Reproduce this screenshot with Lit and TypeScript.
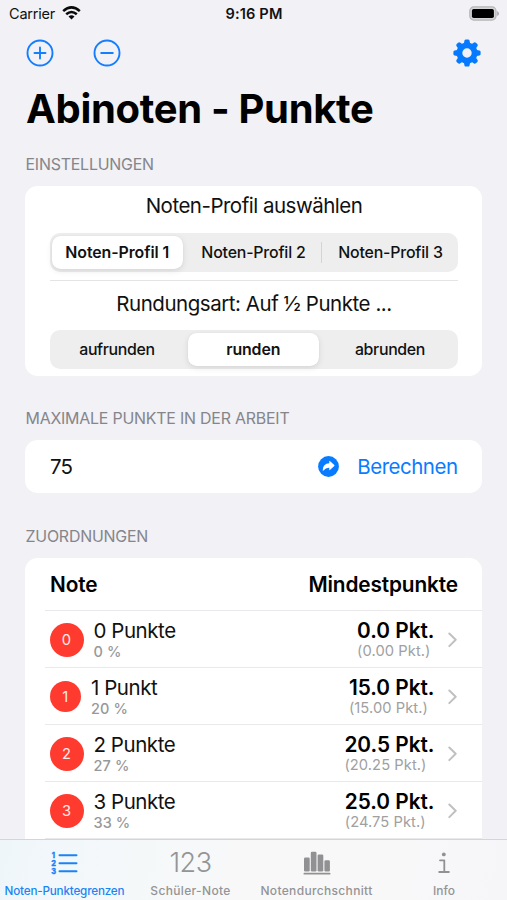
import { LitElement, html, css, svg } from "lit";

interface Grade {
  id: number;
  label: string;
  percent: string;
  points: string;
  exact: string;
  narrow?: boolean;
}

const GRADES: Grade[] = [
  { id: 0, label: "0 Punkte", percent: "0 %", points: "0.0 Pkt.", exact: "(0.00 Pkt.)" },
  { id: 1, label: "1 Punkt", percent: "20 %", points: "15.0 Pkt.", exact: "(15.00 Pkt.)", narrow: true },
  { id: 2, label: "2 Punkte", percent: "27 %", points: "20.5 Pkt.", exact: "(20.25 Pkt.)" },
  { id: 3, label: "3 Punkte", percent: "33 %", points: "25.0 Pkt.", exact: "(24.75 Pkt.)" },
];

const gearTeeth = [0, 45, 90, 135, 180, 225, 270, 315].map(
  (a) => svg`<path d="M10.700 5.500 L11.500 1.600 Q11.800 .4 13 .4 H15 Q16.200 .4 16.500 1.600 L17.300 5.500Z" transform="rotate(${a} 14 14)"></path>`
);

class GradeRow extends LitElement {
  static properties = { grade: { attribute: false } };
  declare grade: Grade;

  static styles = css`
    :host { display: block; margin-left: 19.500px; height: 57px; box-sizing: border-box; border-bottom: 1px solid #e9e9eb; }
    .row { display: flex; height: 56px; align-items: center; padding: 1px 25px 0 5px; box-sizing: border-box; }
    .badge { flex: none; width: 34px; height: 34px; border-radius: 50%; background: #ff3b30; color: #ffe9e7; font-size: 14.700px; display: flex; align-items: center; justify-content: center; }
    .badge.narrow { width: 31.500px; height: 31.500px; }
    .name { margin-left: 10px; flex: 1; display: flex; flex-direction: column; }
    .label { font-size: 20.500px; letter-spacing: -0.45px; line-height: 24px; color: #111; }
    .percent { font-size: 14.500px; font-weight: 500; line-height: 17px; color: #98989a; letter-spacing: 0.1px; }
    .values { display: flex; flex-direction: column; align-items: flex-start; margin-right: 13.500px; }
    .points { font-size: 20.800px; font-weight: 600; line-height: 24px; color: #000; white-space: nowrap; }
    .exact { font-size: 14.700px; line-height: 17px; color: #a0a0a2; letter-spacing: 0.07px; white-space: nowrap; }
    .chev { flex: none; width: 9px; height: 16px; display: block; }
  `;

  render() {
    const g = this.grade;
    return html`<div class="row">
      <div class="badge ${g.narrow ? "narrow" : ""}">${g.id}</div>
      <div class="name"><span class="label">${g.label}</span><span class="percent">${g.percent}</span></div>
      <div class="values"><span class="points">${g.points}</span><span class="exact">${g.exact}</span></div>
      <svg class="chev" viewBox="0 0 9 16"><path d="M1.300 1.500 L7.700 7.800 L1.300 14.100" fill="none" stroke="#c0c0c2" stroke-width="2" stroke-linecap="round" stroke-linejoin="round"></path></svg>
    </div>`;
  }
}
customElements.define("grade-row", GradeRow);

class AppRoot extends LitElement {
  static styles = css`
    :host { display: flex; flex-direction: column; width: 507px; height: 900px; overflow: hidden; background: #f1f1f6; color: #111; font-family: Inter, "Liberation Sans", sans-serif; }
    svg { display: block; }
    .status { height: 27px; flex: none; display: grid; grid-template-columns: 1fr auto 1fr; align-items: center; padding: 0 8px 0 9px; font-size: 14.700px; color: #111; }
    .carrier { display: flex; align-items: center; gap: 6.500px; letter-spacing: -0.2px; margin-top: -1px; }
    .carrier span { font-size: 14.500px; }
    .time { font-weight: 600; letter-spacing: 0.14px; font-size: 14.600px; }
    .battery { justify-self: end; margin-top: -1px; }
    .nav { height: 51px; flex: none; display: flex; align-items: center; padding: 0 26px 0 26px; box-sizing: border-box; }
    .nav .minus { margin-left: 38.500px; }
    .nav .gear { margin-left: auto; }
    h1 { margin: 0 0 0 26px; height: 61px; line-height: 61px; font-size: 40px; font-weight: 700; letter-spacing: -0.32px; color: #000; white-space: nowrap; flex: none; }
    .content { flex: 1; min-height: 0; overflow: hidden; padding: 0 25px 0 25px; }
    .caption { font-size: 15.900px; line-height: 20px; color: #85858a; letter-spacing: -0.2px; margin: 16px 0 10.500px 0.500px; white-space: nowrap; }
    .caption.later { margin: 33px 0 11px 0.500px; }
    .caption.last { margin: 33.500px 0 11px 0.500px; }
    .card { background: #fff; border-radius: 12.500px; box-sizing: border-box; }
    .settings { height: 190px; padding: 7px 24px 0 25px; }
    .heading { text-align: center; font-size: 20.500px; line-height: 26px; letter-spacing: -0.5px; }
    .segments { height: 38.500px; margin-top: 14.500px; border-radius: 10px; background: #eeeeef; display: grid; grid-template-columns: repeat(3, 1fr); font-size: 15.900px; font-weight: 500; }
    .segment { display: flex; align-items: center; justify-content: center; border-radius: 8.500px; letter-spacing: -0.18px; padding-right: 1px; }
    .segment:last-child { padding: 0 0 0 1px; }
    .segment.word { letter-spacing: -0.34px; padding: 1px 2px 0 0; }
    .segment.word:last-child { padding: 1px 0 0; }
    .segment.on { background: #fff; font-weight: 600; letter-spacing: -0.08px; box-shadow: 0 2px 6px rgba(0, 0, 0, 0.1), 0 0 1px rgba(0, 0, 0, 0.1); margin: 2.500px 3.500px 2.500px 2px; padding: 0; }
    .segment.word + .on { padding-top: 1px; letter-spacing: -0.12px; }
    .segment.ruled { background: linear-gradient(#d4d4d6, #d4d4d6) right center / 1px 21px no-repeat; border-radius: 0; }
    .rule { height: 1px; background: #e4e4e6; margin: 8.500px 0 10px; }
    .rule + .heading { letter-spacing: -0.46px; }
    .rule + .heading + .segments { margin-top: 13px; }
    .max { height: 53.500px; display: flex; align-items: center; padding: 1px 24.500px 0 25px; font-size: 20.500px; }
    .amount { letter-spacing: -0.8px; }
    .calc { margin-left: auto; display: flex; align-items: center; gap: 18.500px; color: #0a7cff; letter-spacing: -0.5px; }
    .list { height: 400px; }
    .head { margin-left: 19.500px; height: 53.500px; box-sizing: border-box; border-bottom: 1px solid #e9e9eb; padding: 1px 24px 0 5.500px; display: flex; justify-content: space-between; align-items: center; font-size: 20.800px; font-weight: 600; letter-spacing: -0.12px; color: #000; }
    .tabs { flex: none; height: 61px; box-sizing: border-box; border-top: 1px solid #d5d5d8; background: linear-gradient(100deg, #eff6fa 0, #f4f8fa 22%, #f8f8f9 45%, #f8f8f9 80%, #f6f6f9 100%); display: grid; grid-template-columns: 129px 123px 129px 1fr; color: #949496; }
    .tab { display: flex; flex-direction: column; align-items: center; font-size: 12px; font-weight: 500; }
    .glyph { height: 44px; padding-top: 2px; box-sizing: border-box; display: flex; align-items: center; justify-content: center; }
    .tab span { line-height: 14px; white-space: nowrap; }
    .tab.active { color: #1a84f5; }
    .tab.active span { font-size: 11.700px; letter-spacing: -0.2px; }
    .tab .wide { letter-spacing: 0.34px; }
    .number { font-size: 27px; font-weight: 300; letter-spacing: -0.5px; padding-top: 1px; }
    .listicon { font-weight: 800; font-size: 7.300px; font-family: Inter, sans-serif; }
    .listicon text { stroke: #1a84f5; stroke-width: 0.3px; }
  `;

  render() {
    return html`
      <div class="status">
        <div class="carrier"><span>Carrier</span>
          <svg width="19" height="14" viewBox="0 0 19 14" fill="none" stroke="#0a0a0a" stroke-width="2.500">
            <path d="M1.200 5.200 Q9.500 -2.400 17.800 5.200"></path>
            <path d="M4.200 8.300 Q9.500 3.600 14.800 8.300"></path>
            <path d="M9.500 13.400 L6.500 10.500 Q9.500 8.200 12.500 10.500Z" fill="#0a0a0a" stroke="none"></path>
          </svg>
        </div>
        <div class="time">9:16 PM</div>
        <svg class="battery" width="30" height="15" viewBox="0 0 30 15">
          <rect x="0.800" y="0.900" width="26.200" height="13.200" rx="4" fill="#d5d5d7" stroke="#b5b5b7" stroke-width="1.200"></rect>
          <rect x="2.900" y="2.900" width="22" height="9.200" rx="1.800" fill="#000"></rect>
          <path d="M28.200 5 Q30 6 30 7.500 Q30 9 28.200 10Z" fill="#a9a9ab"></path>
        </svg>
      </div>
      <div class="nav">
        <svg width="28" height="28" viewBox="0 0 28 28" fill="none" stroke="#147eff" stroke-width="1.900" stroke-linecap="round">
          <circle cx="14" cy="14" r="12.500"></circle><path d="M8.500 14 H19.500 M14 8.500 V19.500"></path>
        </svg>
        <svg class="minus" width="28" height="28" viewBox="0 0 28 28" fill="none" stroke="#147eff" stroke-width="1.900" stroke-linecap="round">
          <circle cx="14" cy="14" r="12.500"></circle><path d="M8.200 14 H19.800"></path>
        </svg>
        <svg class="gear" width="28" height="28" viewBox="0 0 28 28" fill="#067aff">
          ${gearTeeth}
          <circle cx="14" cy="14" r="7.600" fill="none" stroke="#067aff" stroke-width="5.800"></circle>
        </svg>
      </div>
      <h1>Abinoten - Punkte</h1>
      <div class="content">
        <div class="caption">EINSTELLUNGEN</div>
        <div class="card settings">
          <div class="heading">Noten-Profil auswählen</div>
          <div class="segments">
            <div class="segment on">Noten-Profil 1</div>
            <div class="segment ruled">Noten-Profil 2</div>
            <div class="segment">Noten-Profil 3</div>
          </div>
          <div class="rule"></div>
          <div class="heading">Rundungsart: Auf ½ Punkte ...</div>
          <div class="segments">
            <div class="segment word">aufrunden</div>
            <div class="segment on">runden</div>
            <div class="segment word">abrunden</div>
          </div>
        </div>
        <div class="caption later">MAXIMALE PUNKTE IN DER ARBEIT</div>
        <div class="card max">
          <span class="amount">75</span>
          <div class="calc">
            <svg width="21" height="21" viewBox="0 0 21 21"><circle cx="10.500" cy="10.500" r="10.400" fill="#087bff"></circle>
              <path d="M11.300 5.200 Q11.300 4.500 11.900 5 L16.300 9 Q16.800 9.500 16.300 10 L11.900 14 Q11.300 14.500 11.300 13.800 V11.800 Q7.500 11.600 5.500 14.600 Q4.800 15.300 4.700 14.200 Q4.800 7.700 11.300 7.300Z" fill="#fff"></path></svg>
            <span>Berechnen</span>
          </div>
        </div>
        <div class="caption later last">ZUORDNUNGEN</div>
        <div class="card list">
          <div class="head"><span>Note</span><span>Mindestpunkte</span></div>
          ${GRADES.map((g) => html`<grade-row .grade=${g}></grade-row>`)}
        </div>
      </div>
      <div class="tabs">
        <div class="tab active">
          <div class="glyph">
            <svg class="listicon" width="27" height="24" viewBox="0 0 27 24" fill="#1a84f5">
              <text x="0.700" y="6.500">1</text><text x="0.200" y="14.700">2</text><text x="0.200" y="22.900">3</text>
              <path d="M8.500 4.200 H25.500 M8.500 12.200 H25.500 M8.500 20.200 H25.500" stroke="#1a84f5" stroke-width="2" stroke-linecap="round"></path>
            </svg>
          </div>
          <span>Noten-Punktegrenzen</span>
        </div>
        <div class="tab"><div class="glyph number">123</div><span class="wide">Schüler-Note</span></div>
        <div class="tab">
          <div class="glyph">
            <svg width="28" height="24" viewBox="0 0 28 24" fill="#919193">
              <rect x="1" y="6.500" width="5.700" height="14" rx="1.200"></rect>
              <rect x="7.800" y="0.700" width="5.700" height="19.800" rx="1.200"></rect>
              <rect x="14.600" y="3.600" width="5.700" height="16.900" rx="1.200"></rect>
              <rect x="21.400" y="9.200" width="5.500" height="11.300" rx="1.200"></rect>
              <rect x="0.500" y="21.800" width="27" height="1.800" rx="0.900"></rect>
            </svg>
          </div>
          <span class="wide">Notendurchschnitt</span>
        </div>
        <div class="tab">
          <div class="glyph">
            <svg width="12" height="22" viewBox="0 0 12 22" fill="none" stroke="#919193" stroke-width="1.800" stroke-linecap="round" stroke-linejoin="round">
              <circle cx="5.800" cy="2.400" r="1.900" fill="#919193" stroke="none"></circle>
              <path d="M2 8.300 H6.300 V20 M1.200 20 H10.900"></path>
            </svg>
          </div>
          <span>Info</span>
        </div>
      </div>
    `;
  }
}
customElements.define("app-root", AppRoot);
